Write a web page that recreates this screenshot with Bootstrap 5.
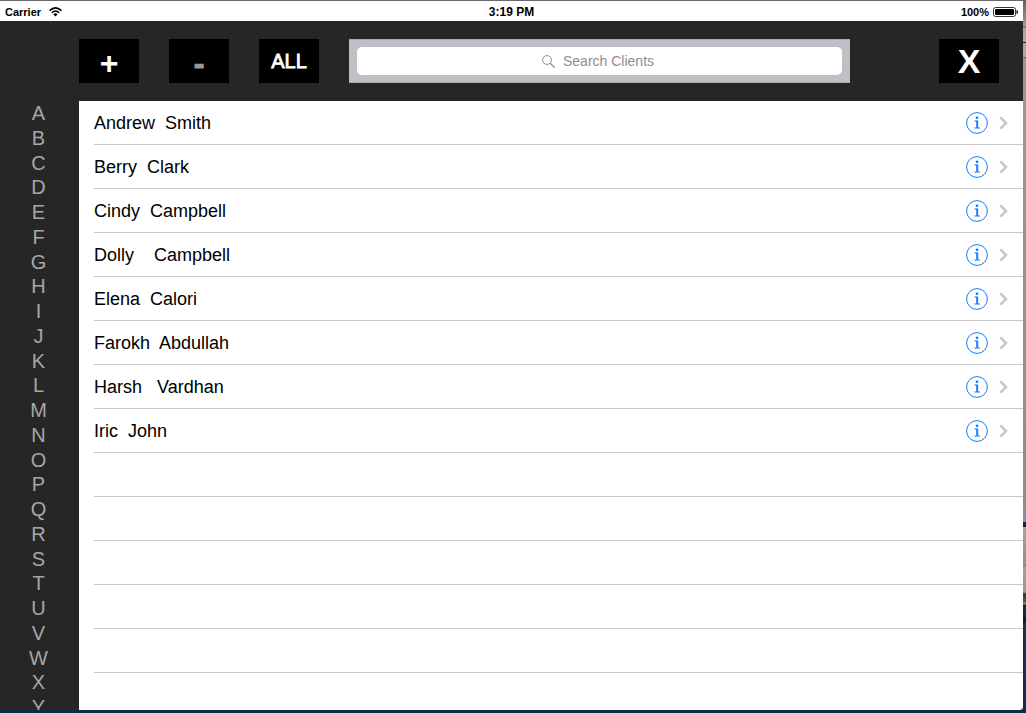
<!DOCTYPE html>
<html lang="en">
<head>
<meta charset="utf-8">
<meta name="viewport" content="width=device-width, initial-scale=1">
<title>Clients</title>
<link href="https://cdn.jsdelivr.net/npm/bootstrap@5.3.0/dist/css/bootstrap.min.css" rel="stylesheet">
<style>
body { font-family: "Liberation Sans", Arial, sans-serif; background: #0c2b47; color: #000; }
.desktop { display: grid; grid-template-columns: minmax(0, 1fr) 3px; grid-template-rows: minmax(0, 1fr) 3px; }
.backdrop { background: linear-gradient(#606060 0, #999 24px, #a4a4a4 26px, #555 27px, #a9a9a9 28px, #a9a9a9 42px, #222 42px, #222 43px, #a9a9a9 43px, #a9a9a9 57px, #666 57px, #666 58px, #999 58px, #8d8d8d 522px, #14304a 522px, #0b2034 527px, #a6a6a6 527px, #8f8f8f 565px, #777 566px, #a0a0a0 567px, #999 592px, #333 594px, #555 602px, #999 604px, #11212e 605px, #10314b 616px, #111 618px, #333 627px, #12344d 628px, #0d2f4a); }
.shell { background: #262626; border-top: 1px solid #6a6a6c; border-bottom-right-radius: 3px; }
.status { height: 20px; padding: 2px 5px 0; background: #fff; font-size: 11px; font-weight: 700; line-height: 18px; }
.clock { font-size: 12px; }
.toolbar { height: 80px; padding: 18px 24px 0 79px; }
.toolset { gap: 30px; margin-right: 30px; }
.tool { width: 60px; height: 44px; padding: 0; border: 0; background: #000; color: #fff; font-size: 20px; line-height: 44px; -webkit-text-stroke: .8px currentColor; }
.tool:disabled { color: #999; }
.tool-sign { font-size: 32px; font-weight: 700; line-height: 48px; -webkit-text-stroke: 0; }
.tool-sign:disabled { -webkit-text-stroke: 1px currentColor; }
.tool-close { font-size: 34px; font-weight: 700; -webkit-text-stroke: 0; }
.search { width: 501px; height: 44px; padding: 7px 8px; background: #c0bfc5; border-top: 1px solid #abaaaf; border-bottom: 1px solid #abaaaf; }
.search-box { height: 28px; border-radius: 5px; background: #fff; color: #8e8e93; cursor: text; }
.search-box input { width: 94px; padding: 0; border: 0; outline: 0; background: none; font-size: 14px; line-height: 20px; }
.search-box input::placeholder { color: #8e8e93; opacity: 1; }
.letters { width: 79px; overflow: hidden; }
.letters ol { display: grid; grid-auto-rows: 1fr; height: 619px; padding-right: 2px; }
.letters a { display: block; color: #a6a6a6; font-size: 20px; line-height: 24px; }
.clients { background: #fff; padding-left: 15px; overflow: hidden; border-bottom-right-radius: 3px; }
.client { height: 44px; padding-right: 15px; border-bottom: 1px solid #c8c7cc; font-size: 18px; line-height: 44px; white-space: pre; }
.info { padding: 0; border: 0; background: none; line-height: 0; }
.chevron { margin-left: 11px; }
</style>
</head>
<body>
<div class="desktop vh-100 overflow-hidden">
  <div class="shell d-flex flex-column overflow-hidden">
    <header class="status row g-0 flex-shrink-0">
      <div class="col d-flex align-items-center gap-2"><span>Carrier</span>
        <svg width="13" height="10" viewBox="0 0 13 10" fill="none" stroke="#000" stroke-width="1.5" aria-hidden="true"><path d="M.6 3.6Q6.5-1.9 12.4 3.6M2.8 5.8Q6.5 2.2 10.2 5.8"/><path d="M4.3 7.2Q6.5 5.4 8.7 7.2L6.5 9.4Z" fill="#000" stroke="none"/></svg>
      </div>
      <div class="col text-center clock">3:19 PM</div>
      <div class="col d-flex align-items-center justify-content-end gap-1"><span>100%</span>
        <svg width="25" height="10" viewBox="0 0 25 10" aria-hidden="true"><rect x=".5" y=".5" width="22" height="9" rx="2" fill="#fff" stroke="#333"/><rect x="2" y="2" width="19" height="6" rx="1"/><path d="M23.5 3Q25 3.2 25 5T23.5 7Z"/></svg>
      </div>
    </header>
    <div class="toolbar d-flex flex-shrink-0">
      <div class="d-flex toolset">
        <button type="button" class="tool tool-sign" aria-label="Add client">+</button>
        <button type="button" class="tool tool-sign" aria-label="Remove client" disabled>-</button>
        <button type="button" class="tool">ALL</button>
      </div>
      <div class="search">
        <label class="search-box d-flex align-items-center justify-content-center">
          <svg class="me-2" width="13" height="13" viewBox="0 0 13 13" fill="none" stroke="#8e8e93" aria-hidden="true"><circle cx="5" cy="5" r="4.4"/><path d="M8.2 8.2L12.6 12.6" stroke-width="1.3"/></svg>
          <input type="text" placeholder="Search Clients" aria-label="Search Clients">
        </label>
      </div>
      <button type="button" class="tool tool-close ms-auto" aria-label="Close">X</button>
    </div>
    <div class="d-flex flex-grow-1 overflow-hidden">
      <nav class="letters flex-shrink-0 text-center" aria-label="Index"><ol class="list-unstyled mb-0" id="letters"></ol></nav>
      <main class="clients flex-grow-1"><ul class="list-unstyled mb-0" id="clients"></ul></main>
    </div>
  </div>
  <div class="backdrop"></div>
</div>
<script src="https://cdn.jsdelivr.net/npm/bootstrap@5.3.0/dist/js/bootstrap.bundle.min.js"></script>
<script>
document.getElementById('letters').innerHTML = [...'ABCDEFGHIJKLMNOPQRSTUVWXY']
  .map(l => `<li><a class="text-decoration-none" href="#${l}">${l}</a></li>`).join('');
const names = ['Andrew  Smith', 'Berry  Clark', 'Cindy  Campbell', 'Dolly    Campbell', 'Elena  Calori', 'Farokh  Abdullah', 'Harsh   Vardhan', 'Iric  John'];
const controls = name => `<button type="button" class="info ms-auto" aria-label="Details for ${name}"><svg width="22" height="22" viewBox="0 0 22 22" fill="none" stroke="#157efb"><circle cx="11" cy="11" r="10.4"/><circle cx="11" cy="5.8" r="1.4" fill="#157efb" stroke="none"/><path d="M8.4 9H11"/><path d="M11.2 8.6V16" stroke-width="2"/><path d="M8.4 16H14"/></svg></button><svg class="chevron" width="9" height="14" viewBox="0 0 9 14" fill="none" stroke="#c7c7cc" stroke-width="2.6" aria-hidden="true"><path d="M1.4 1.4L7 7L1.4 12.6"/></svg>`;
document.getElementById('clients').innerHTML =
  names.map(n => `<li class="client d-flex align-items-center"><span>${n}</span>${controls(n)}</li>`).join('') +
  '<li class="client"></li>'.repeat(5);
</script>
</body>
</html>
